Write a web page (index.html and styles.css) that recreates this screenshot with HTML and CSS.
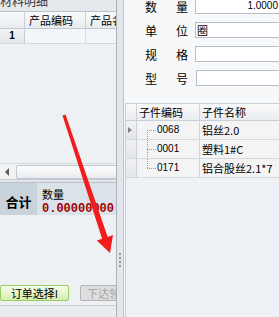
FILE: index.html
```html
<!DOCTYPE html>
<html lang="zh-CN">
<head>
    <meta charset="UTF-8">
    <title>材料明细</title>
    <link rel="stylesheet" href="styles.css">
</head>
<body>
    <div class="screen">
        <div class="left">
            <div class="left-title"><span>材料明细</span></div>
            <div class="lhead">
                <div class="rh"></div>
                <div class="lc1">产品编码</div>
                <div class="lc2">产品名称</div>
            </div>
            <div class="lrow">
                <div class="rh">1</div>
                <div class="lc1"></div>
                <div class="lc2"></div>
            </div>
            <div class="lbody"></div>
            <div class="hscroll">
                <span class="arr-left"></span>
                <span class="thumb"></span>
            </div>
            <div class="sep"></div>
            <div class="sum">
                <div class="sum-label">合计</div>
                <div class="sum-val">
                    <div>数量</div>
                    <div class="num">0.00000000</div>
                </div>
            </div>
            <div class="lempty"></div>
            <div class="btns">
                <button class="btn btn-ok">订单选择I</button>
                <button class="btn btn-off">下达领料</button>
            </div>
            <div class="gap4"></div>
            <div class="foot"></div>
        </div>

        <div class="split">
            <span></span><span></span><span></span><span></span>
        </div>

        <div class="right">
            <div class="form">
                <div class="field">
                    <div class="lbl"><span>数</span><span>量</span></div>
                    <div class="inp num-inp">1.0000</div>
                </div>
                <div class="field">
                    <div class="lbl"><span>单</span><span>位</span></div>
                    <div class="inp">圈</div>
                </div>
                <div class="field">
                    <div class="lbl"><span>规</span><span>格</span></div>
                    <div class="inp"></div>
                </div>
                <div class="field">
                    <div class="lbl"><span>型</span><span>号</span></div>
                    <div class="inp inp-last"></div>
                </div>
            </div>

            <div class="rgrid">
                <div class="rhead">
                    <div class="rrh"></div>
                    <div class="rc1">子件编码</div>
                    <div class="rc2">子件名称</div>
                </div>
                <div class="rrow">
                    <div class="rrh"><span class="cur"></span></div>
                    <div class="rc1">
                        <svg class="tree" width="20" height="18" viewBox="0 0 20 18"><path d="M10.5 9V18M10 9.5H19" stroke="#9a9a9a" stroke-dasharray="1 1"/></svg>
                        <span class="code">0068</span>
                    </div>
                    <div class="rc2">铝丝2.0</div>
                </div>
                <div class="rrow">
                    <div class="rrh"></div>
                    <div class="rc1">
                        <svg class="tree" width="20" height="18" viewBox="0 0 20 18"><path d="M10.5 0V18M10 9.5H19" stroke="#9a9a9a" stroke-dasharray="1 1"/></svg>
                        <span class="code">0001</span>
                    </div>
                    <div class="rc2">塑料1#C</div>
                </div>
                <div class="rrow">
                    <div class="rrh"></div>
                    <div class="rc1">
                        <svg class="tree" width="20" height="18" viewBox="0 0 20 18"><path d="M10.5 0V9.5M10 9.5H19" stroke="#9a9a9a" stroke-dasharray="1 1"/></svg>
                        <span class="code">0171</span>
                    </div>
                    <div class="rc2">铝合股丝2.1*7</div>
                </div>
            </div>
        </div>

        <svg class="arrow" width="279" height="317" viewBox="0 0 279 317">
            <polygon points="65.5,114.5 107.7,236.9 113,235 110,253 96.8,240.5 102.1,238.7 62.5,115.5" fill="#f21c1c"/>
        </svg>
    </div>
</body>
</html>
```

FILE: styles.css
```css
body {
    margin: 0;
    background: #eef1f4;
}

.screen {
    position: relative;
    width: 279px;
    height: 317px;
    display: flex;
    overflow: hidden;
    font-family: "Noto Sans CJK SC", sans-serif;
    font-size: 11px;
    color: #000;
}

/* left panel */
.left {
    width: 116px;
    border-right: 1px solid #a9b1b9;
    display: flex;
    flex-direction: column;
    background: #eef1f4;
    overflow: hidden;
}

.left-title {
    height: 11px;
    border-bottom: 1px solid #b9c0c7;
    background: #e6e9ec;
    overflow: hidden;
}

.left-title span {
    display: block;
    margin-top: -7px;
    font-size: 12px;
    line-height: 16px;
    color: #333;
    white-space: nowrap;
}

.lhead, .lrow {
    display: flex;
    white-space: nowrap;
}

.lhead {
    height: 16px;
    line-height: 16px;
    border-bottom: 1px solid #c3c9cf;
    background: linear-gradient(#f9fafb, #e8ebee);
}

.lrow {
    height: 14px;
    line-height: 14px;
    border-bottom: 1px solid #d2d8de;
    background: #f3f6f9;
}

.rh {
    width: 24px;
    flex: none;
    border-right: 1px solid #c9cfd5;
    text-align: center;
    font-family: "Liberation Sans", sans-serif;
    font-size: 10px;
    font-weight: bold;
}

.lrow .rh {
    background: linear-gradient(#f0f2f4, #e2e6ea);
}

.lc1 {
    width: 61px;
    flex: none;
    padding-left: 4px;
    box-sizing: border-box;
    border-right: 1px solid #c9cfd5;
}

.lrow .lc1 {
    border-right-color: #d6dce2;
}

.lc2 {
    flex: none;
    width: 60px;
    padding-left: 4px;
}

.lbody {
    height: 119px;
}

.hscroll {
    height: 16px;
    display: flex;
    align-items: center;
    background: #f0f2f4;
    border-top: 1px solid #d5dadf;
    box-sizing: border-box;
}

.arr-left {
    margin-left: 5px;
    border-right: 4px solid #5a5a5a;
    border-top: 4px solid transparent;
    border-bottom: 4px solid transparent;
}

.thumb {
    flex: 1;
    height: 12px;
    margin-left: 7px;
    margin-right: -3px;
    border: 1px solid #c2c7cc;
    border-radius: 2px;
    background: linear-gradient(#fdfdfd, #e8ebee);
}

.sep {
    height: 4px;
    box-sizing: border-box;
    background: #e2e6ea;
    border-top: 1px solid #c4cad0;
    border-bottom: 1px solid #b8c0c8;
}

.sum {
    height: 32px;
    display: flex;
    background: #dbe2e9;
}

.sum-label {
    width: 37px;
    padding-top: 5px;
    box-sizing: border-box;
    background: #c8d3dc;
    display: flex;
    align-items: center;
    justify-content: center;
    font-size: 13px;
    font-weight: bold;
}

.sum-val {
    padding: 5px 0 0 5px;
    line-height: 13px;
    white-space: nowrap;
}

.num {
    margin-top: 2px;
    font-family: "Liberation Mono", monospace;
    font-size: 12px;
    font-weight: bold;
    color: #a00000;
}

.lempty {
    height: 70px;
}

.btns {
    height: 16px;
    display: flex;
}

.btn {
    height: 16px;
    box-sizing: border-box;
    padding: 0;
    border-radius: 2px;
    font-family: inherit;
    font-size: 11px;
    line-height: 14px;
    white-space: nowrap;
}

.btn-ok {
    width: 69px;
    flex: none;
    border: 1px solid #9ccd63;
    background: linear-gradient(#f6fbec, #d4edb0);
    color: #000;
}

.btn-off {
    width: 50px;
    flex: none;
    margin-left: 11px;
    padding-left: 6px;
    text-align: left;
    overflow: hidden;
    border: 1px solid #b5b5b5;
    background: #dedede;
    color: #a5a5a5;
}

.gap4 {
    height: 4px;
}

.foot {
    flex: 1;
    border-top: 1px solid #c9ced3;
    background: #e9ecef;
}

/* splitter */
.split {
    width: 6px;
    flex: none;
    background: #e3e7eb;
    border-right: 1px solid #bcc4cb;
    display: flex;
    flex-direction: column;
    align-items: center;
    justify-content: flex-end;
    gap: 2px;
    padding-bottom: 50px;
    box-sizing: content-box;
}

.split span {
    width: 2px;
    height: 2px;
    background: #8e98a2;
}

/* right panel */
.right {
    flex: 1;
    display: flex;
    flex-direction: column;
    background: #f7f8f9;
    overflow: hidden;
}

.form {
    height: 105px;
    margin-top: -2px;
    display: flex;
    flex-direction: column;
    gap: 8px;
    flex: none;
}

.field {
    height: 16px;
    display: flex;
    align-items: center;
}

.lbl {
    width: 43px;
    margin-left: 21px;
    display: flex;
    justify-content: space-between;
    font-size: 12px;
}

.inp {
    flex: 1;
    height: 16px;
    box-sizing: border-box;
    margin-left: 7px;
    margin-right: -2px;
    padding: 0 1px;
    border: 1px solid #b5bfc9;
    background: #fff;
    line-height: 14px;
}

.inp-last {
    margin-left: 8px;
}

.num-inp {
    text-align: right;
    padding-right: 2px;
    font-family: "Liberation Sans", sans-serif;
    font-size: 10px;
}

.rgrid {
    flex: 1;
    margin-left: 1px;
    border-top: 1px solid #c9cfd5;
    border-left: 1px solid #c9cfd5;
    background: #eef2f6;
}

.rhead, .rrow {
    display: flex;
    white-space: nowrap;
}

.rhead {
    height: 16px;
    line-height: 16px;
    border-bottom: 1px solid #c9cfd5;
    background: linear-gradient(#f9fafb, #e9ecef);
}

.rrow {
    height: 18px;
    line-height: 18px;
    border-bottom: 1px solid #d6d9dc;
    background: #f4f4f4;
}

.rrh {
    width: 10px;
    flex: none;
    border-right: 1px solid #ccd1d6;
    display: flex;
    align-items: center;
}

.rrow .rrh {
    background: linear-gradient(#eff1f3, #e3e6e9);
}

.cur {
    margin-left: 2px;
    border-left: 4px solid #7e7e7e;
    border-top: 3px solid transparent;
    border-bottom: 3px solid transparent;
}

.rc1 {
    width: 63px;
    flex: none;
    padding-left: 2px;
    box-sizing: border-box;
    border-right: 1px solid #d0d4d8;
    display: flex;
}

.rrow .rc1 {
    padding-left: 0;
}

.tree {
    flex: none;
}

.code {
    font-family: "Liberation Sans", sans-serif;
    font-size: 10px;
}

.rc2 {
    flex: 1;
    padding-left: 2px;
}

.arrow {
    position: absolute;
    left: 0;
    top: 0;
    pointer-events: none;
}
```
